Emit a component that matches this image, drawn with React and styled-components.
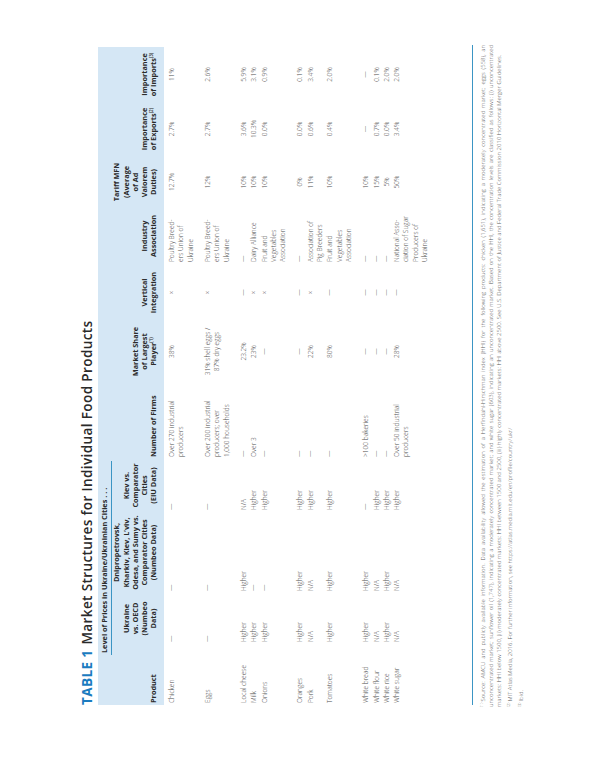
import React from 'react';
import styled, { createGlobalStyle } from 'styled-components';

const Global = createGlobalStyle`
  html, body { margin: 0; padding: 0; background: #fff; }
  body { width: 600px; height: 776px; overflow: hidden; }
`;

const Stage = styled.div`
  width: 600px;
  height: 776px;
  overflow: hidden;
  background: #fff;
`;

const Sheet = styled.div`
  width: 776px;
  height: 600px;
  box-sizing: border-box;
  padding: 79px 45px 0 71px;
  transform-origin: 0 0;
  transform: translateY(776px) rotate(-90deg);
  font-family: "Open Sans", "Noto Sans", sans-serif;
  color: #555;
  display: flex;
  flex-direction: column;
`;

const Title = styled.div`
  height: 19px;
  font-size: 13.6px;
  line-height: 16px;
  font-weight: 600;
  letter-spacing: 0.35px;
  color: #2a2a2a;
  white-space: nowrap;
`;

const TableNo = styled.span`
  color: #1b7cc0;
  font-weight: 700;
  margin-right: 5px;
`;

const TableArea = styled.div`
  height: 374px;
`;

const Table = styled.table`
  width: 658px;
  table-layout: fixed;
  border-collapse: collapse;
  border-spacing: 0;
`;

const Col = styled.col`
  width: ${(p) => p.$w}px;
`;

const Th = styled.th`
  background: #d5e7f5;
  font-size: 7.3px;
  line-height: 9.3px;
  font-weight: 700;
  color: #2b2b2b;
  vertical-align: bottom;
  text-align: ${(p) => p.$align || 'center'};
  padding: 0 2px 5px;
`;

const GroupTh = styled.th`
  background: #d5e7f5;
  font-size: 7.3px;
  line-height: 9.3px;
  font-weight: 700;
  color: #2b2b2b;
  text-align: left;
  padding: 2px 0 0;
  vertical-align: top;
`;

const GroupLabel = styled.div`
  padding: 0 0 2px 2px;
  margin: 0 2px 0 -11px;
  border-bottom: 1px solid #3b95c4;
  white-space: nowrap;
`;

const Sup = styled.sup`
  font-size: 4.5px;
  line-height: 0;
  vertical-align: 3px;
  font-weight: 600;
`;

const Row = styled.tr`
  & > td {
    padding-bottom: ${(p) => (p.$gap ? 7 : 0)}px;
  }
  &:first-child > td {
    padding-top: 3.4px;
  }
`;

const Td = styled.td`
  font-size: 6.6px;
  line-height: 9.3px;
  font-weight: 300;
  color: #4d4d4d;
  vertical-align: top;
  text-align: ${(p) => p.$align || 'left'};
  padding-left: 2px;
  padding-right: 2px;
`;

const Rule = styled.div`
  border-top: 1px solid #3b95c4;
  width: 660px;
`;

const Notes = styled.div`
  padding-top: 6px;
  width: 662px;
  margin-left: -2px;
  font-size: 6px;
  line-height: 8px;
  font-weight: 300;
  color: #555;
`;

const Note = styled.div`
  margin-bottom: 3px;
`;

const NoteLine = styled.div`
  text-align: justify;
  text-align-last: ${(p) => (p.$last ? 'left' : 'justify')};
  white-space: nowrap;
`;

const NoteSup = styled.sup`
  font-size: 4px;
  line-height: 0;
  vertical-align: 2px;
  margin-right: 1px;
`;

const widths = [61, 51, 81, 53, 77, 61, 57, 56, 52, 54, 55];
const aligns = ['left', 'left', 'left', 'left', 'left', 'center', 'center', 'left', 'center', 'center', 'center'];

const D = '\u2014';
const rows = [
  ['Chicken', D, D, D, ['Over 270 industrial', 'producers'], '38%', '\u00d7', ['Poultry Breed-', 'ers Union of', 'Ukraine'], '12.7%', '2.7%', '11%', true],
  ['Eggs', D, D, D, ['Over 200 industrial', 'producers; over', '1,000 households'], ['31% shell eggs /', '87% dry eggs'], '\u00d7', ['Poultry Breed-', 'ers Union of', 'Ukraine'], '12%', '2.7%', '2.6%', true],
  ['Local cheese', 'Higher', 'Higher', 'N/A', D, '23.2%', D, D, '10%', '3.6%', '5.9%', false],
  ['Milk', 'Higher', D, 'Higher', 'Over 3', '23%', '\u00d7', 'Dairy Alliance', '10%', '10.3%', '3.1%', false],
  ['Onions', 'Higher', D, 'Higher', D, D, '\u00d7', ['Fruit and', 'Vegetables', 'Association'], '10%', '0.0%', '0.9%', true],
  ['Oranges', 'Higher', 'Higher', 'Higher', D, D, D, D, '0%', '0.0%', '0.1%', false],
  ['Pork', 'N/A', 'N/A', 'Higher', D, '22%', '\u00d7', ['Association of', 'Pig Breeders'], '11%', '0.6%', '3.4%', false],
  ['Tomatoes', 'Higher', 'Higher', 'Higher', D, '80%', D, ['Fruit and', 'Vegetables', 'Association'], '10%', '0.4%', '2.0%', true],
  ['White bread', 'Higher', 'Higher', D, '>100 bakeries', D, D, D, '10%', D, D, false],
  ['White flour', 'N/A', 'N/A', 'Higher', D, D, D, D, '15%', '0.7%', '0.1%', false],
  ['White rice', 'Higher', 'Higher', 'Higher', D, D, D, D, '5%', '0.0%', '2.0%', false],
  ['White sugar', 'N/A', 'N/A', 'Higher', ['Over 50 industrial', 'producers'], '28%', D, ['National Asso-', 'ciation of Sugar', 'Producers of', 'Ukraine'], '50%', '3.4%', '2.0%', false],
];

const Lines = ({ v }) =>
  Array.isArray(v)
    ? v.map((l, i) => (
        <React.Fragment key={i}>
          {l}
          {i < v.length - 1 && <br />}
        </React.Fragment>
      ))
    : v;

export default function App() {
  return (
    <Stage>
      <Global />
      <Sheet>
        <Title>
          <TableNo>TABLE 1</TableNo>Market Structures for Individual Food Products
        </Title>
        <TableArea>
          <Table>
            <colgroup>
              {widths.map((w, i) => (
                <Col key={i} $w={w} />
              ))}
            </colgroup>
            <thead>
              <tr>
                <Th rowSpan={2} $align="left">Product</Th>
                <GroupTh colSpan={3}>
                  <GroupLabel>Level of Prices in Ukraine/Ukrainian Cities . . .</GroupLabel>
                </GroupTh>
                <Th rowSpan={2} $align="left">Number of Firms</Th>
                <Th rowSpan={2}>
                  Market Share<br />of Largest<br />Player<Sup>(1)</Sup>
                </Th>
                <Th rowSpan={2}>
                  Vertical<br />Integration
                </Th>
                <Th rowSpan={2}>
                  Industry<br />Association
                </Th>
                <Th rowSpan={2}>
                  Tariff MFN<br />(Average<br />of Ad<br />Valorem<br />Duties)
                </Th>
                <Th rowSpan={2}>
                  Importance<br />of Exports<Sup>(2)</Sup>
                </Th>
                <Th rowSpan={2}>
                  Importance<br />of Imports<Sup>(3)</Sup>
                </Th>
              </tr>
              <tr>
                <Th>
                  Ukraine<br />vs. OECD<br />(Numbeo<br />Data)
                </Th>
                <Th>
                  Dnipropetrovsk,<br />Kharkiv, Kiev, L’viv,<br />Odesa, and Sumy vs.<br />Comparator Cities<br />(Numbeo Data)
                </Th>
                <Th>
                  Kiev vs.<br />Comparator<br />Cities<br />(EIU Data)
                </Th>
              </tr>
            </thead>
            <tbody>
              {rows.map((r, ri) => (
                <Row key={ri} $gap={r[11]}>
                  {r.slice(0, 11).map((c, ci) => (
                    <Td key={ci} $align={aligns[ci]}>
                      <Lines v={c} />
                    </Td>
                  ))}
                </Row>
              ))}
            </tbody>
          </Table>
        </TableArea>
        <Rule />
        <Notes>
          <Note>
            <NoteLine>
              <NoteSup>(1)</NoteSup>Source: AMCU and publicly available information. Data availability allowed the estimation of a Herfindahl-Hirschman index (HHI) for the following products: chicken (1,651), indicating a moderately concentrated market; eggs (558), an
            </NoteLine>
            <NoteLine>
              unconcentrated market; sunflower oil (1,747), indicating a moderately concentrated market; and white sugar (603), indicating an unconcentrated market. Based on the HHI, the concentration levels are classified as follows: (i) unconcentrated
            </NoteLine>
            <NoteLine $last>
              markets: HHI below 1500, (ii) moderately concentrated markets: HHI between 1500 and 2500, (iii) highly concentrated markets: HHI above 2500. See U.S. Department of Justice and Federal Trade Commission 2010 Horizontal Merger Guidelines.
            </NoteLine>
          </Note>
          <Note>
            <NoteLine $last>
              <NoteSup>(2)</NoteSup>MIT Atlas Media, 2016. For further information, see https://atlas.media.mit.edu/en/profile/country/ukr/
            </NoteLine>
          </Note>
          <Note>
            <NoteLine $last>
              <NoteSup>(3)</NoteSup>Ibid.
            </NoteLine>
          </Note>
        </Notes>
      </Sheet>
    </Stage>
  );
}
